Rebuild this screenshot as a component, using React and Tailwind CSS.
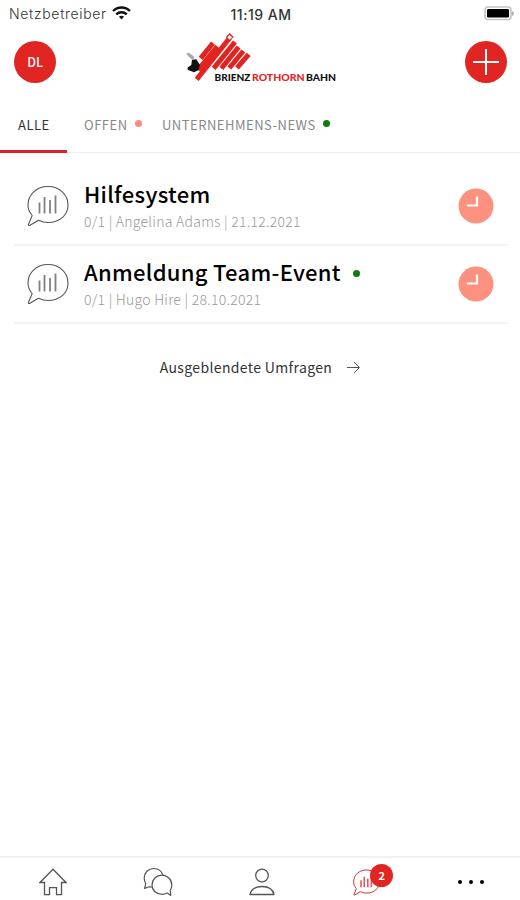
import React from 'react';

const tabs = [
  { label: 'ALLE', active: true, width: 'w-[67px]', pad: 'pl-[18px]', text: 'w-[34px]' },
  { label: 'OFFEN', dot: 'bg-[#fc8b7b]', width: 'w-[80px]', pad: 'pl-[17px]', text: 'w-[45px]' },
  { label: 'UNTERNEHMENS-NEWS', dot: 'bg-[#0b7d0b]', width: 'w-[200px]', pad: 'pl-[15px]', text: 'w-[155px]' },
];

const surveys = [
  { title: 'Hilfesystem', info: '0/1 | Angelina Adams | 21.12.2021' },
  { title: 'Anmeldung Team-Event', info: '0/1 | Hugo Hire | 28.10.2021', isNew: true },
];

function StatusBar() {
  return (
    <div className="h-[27px] grid grid-cols-3 items-center px-[9px] font-['Inter',sans-serif] text-[14px] text-[#333]">
      <div className="flex items-center gap-[5px]">
        <span className="font-light tracking-[0.68px]">Netzbetreiber</span>
        <svg className="-mt-[2px]" width="19" height="14" viewBox="0 0 18 13" fill="none" stroke="#111" strokeWidth="2.3">
          <path d="M1 4.6C5.4.2 12.6.2 17 4.6" />
          <path d="M4 7.8c2.8-2.7 7.2-2.7 10 0" />
          <path d="M6.6 10.1L9 12.7l2.4-2.6c-1.4-1.2-3.4-1.2-4.8 0z" fill="#111" stroke="none" />
        </svg>
      </div>
      <div className="pl-[2px] pt-[1px] text-center font-medium tracking-[0.5px] text-[14px] whitespace-nowrap">11:19 AM</div>
      <div className="flex justify-end -mr-[4px]">
        <svg width="31" height="15" viewBox="0 0 31 15">
          <rect x="1" y="1" width="26" height="12.5" rx="3" fill="#fff" stroke="#c4c4c4" strokeWidth="1.6" />
          <rect x="3" y="3" width="22" height="8.5" rx="1.2" fill="#000" />
          <path d="M28.3 5v5c2-.8 2-4.2 0-5z" fill="#999" />
        </svg>
      </div>
    </div>
  );
}

function Logo() {
  return (
    <svg className="-ml-[2px]" width="170" height="65" viewBox="0 2 170 65">
      <g transform="translate(8 5) scale(.3333)">
        <path
          d="M53 85L90 39M45 120L103 49M41 148L140 24M92 115L156 36M115 115L167 51M139 114L181 63M162 114L197 73"
          stroke="#e2231f"
          strokeWidth="15"
        />
        <path d="M140 9l12 12-12 13-12-13z" fill="#e2231f" />
        <path d="M140 15l7 7-7 7-7-7z" fill="#fff" />
        <path d="M10 70l8-2 14 11 1 8-7 1-10-9z" fill="#aaa" />
        <path d="M27 89l13-1 11 17-5 16-13 6-18-7-2-7 12-8z" fill="#111" />
      </g>
      <text x="39.5" y="55.5" textLength="36" lengthAdjust="spacingAndGlyphs" fontSize="10" fontWeight="900" fill="#111" fontFamily="Lato">BRIENZ</text>
      <text x="77" y="55.5" textLength="52.5" lengthAdjust="spacingAndGlyphs" fontSize="10" fontWeight="900" fill="#e2231f" fontFamily="Lato">ROTHORN</text>
      <text x="131" y="55.5" textLength="30" lengthAdjust="spacingAndGlyphs" fontSize="10" fontWeight="900" fill="#111" fontFamily="Lato">BAHN</text>
    </svg>
  );
}

function SurveyIcon({ className, bars = 1.8 }) {
  return (
    <svg className={className} viewBox="0 0 42 42" fill="none" stroke="currentColor" strokeWidth={bars * 0.6} strokeLinejoin="round">
      <path d="M5.2 30.5C2.5 27.5 1 24 1 20 1 9.5 9.5 1.5 21 1.5S41 9.5 41 20 32.5 37.5 21 37.5c-3.5 0-6.5-.8-9.5-2.3L2.5 40.500c-1 .3-1.300-.5-1-1.200z" />
      <path d="M12.5 17.5v11M17.5 12v16.5M23 15v13.5M28.5 10.5v18" strokeWidth={bars} opacity=".75" />
    </svg>
  );
}

function SurveyRow({ title, info, isNew }) {
  return (
    <li className="h-[78px] flex items-center border-b-2 border-[#f4f4f4] pl-[13px] pr-[14px]">
      <SurveyIcon className="w-[42px] h-[42px] shrink-0 text-[#555]" />
      <div className="flex-1 pl-[15px]">
        <div className="flex items-center gap-[12px]">
          <h2 className="text-[22px] leading-[24px] tracking-[0.3px] font-medium text-black whitespace-nowrap">{title}</h2>
          {isNew && <span className="size-[7px] mt-[4px] rounded-full bg-[#0b7d0b]" />}
        </div>
        <p className="mt-[5px] -mb-[1px] text-[14px] leading-[22px] tracking-[0.26px] font-light text-[#999] whitespace-nowrap">{info}</p>
      </div>
      <svg className="size-[36px]" viewBox="0 0 36 36">
        <circle cx="18" cy="18" r="17.5" fill="#fd9180" />
        <path d="M19 8.5v9H9" fill="none" stroke="#fff" strokeWidth="2.2" />
      </svg>
    </li>
  );
}

function Footer() {
  return (
    <footer className="h-[44px] pl-[1px] flex items-center border-t-2 border-[#f2f2f2] text-[#555]">
      <div className="w-[104.5px] shrink-0 flex justify-center pt-[6px]">
        <svg width="28" height="28" viewBox="0 0 28 28" fill="none" stroke="currentColor" strokeWidth="1.3">
          <path d="M14 1.3L1 14.5h4.5v12.2h5v-7h7v7h5V14.5H27z" />
        </svg>
      </div>
      <div className="w-[104.5px] shrink-0 flex justify-center pt-[5px]">
        <svg width="30" height="30" viewBox="0 0 30 30" fill="none" stroke="currentColor" strokeWidth="1.2" strokeLinejoin="round">
          <path d="M20 8.2C18.5 4 15 1.5 10.8 1.5 5.3 1.5 1.2 5.6 1.2 11c0 2.2.6 4.2 1.6 5.8L1.5 21.5l4.6-1.7 2.6.3" />
          <path d="M27.2 23.5c1-1.7 1.6-3.5 1.6-5.5 0-5.5-4.5-9.8-10-9.8S9 12.5 9 18s4.500 9.300 10 9.300c2 0 3.800-.5 5.300-1.300l3.500 2.500z" />
        </svg>
      </div>
      <div className="w-[104.5px] shrink-0 flex justify-center pt-[6px]">
        <svg width="26" height="28" viewBox="0 0 26 28" fill="none" stroke="currentColor" strokeWidth="1.3" strokeLinejoin="round">
          <circle cx="13" cy="7.5" r="6.3" />
          <path d="M1 26.5c1.2-5.3 6-8 12-8s10.8 2.7 12 8z" />
        </svg>
      </div>
      <div className="w-[104.5px] shrink-0 flex justify-center pt-[6px]">
        <div className="relative">
          <SurveyIcon className="size-[27px] text-[#d8232a]" bars={2.5} />
          <span className="absolute left-[17px] -top-[5px] size-[23px] rounded-full bg-[#e12522] text-white text-[11px] font-bold flex items-center justify-center">2</span>
        </div>
      </div>
      <div className="w-[104.5px] shrink-0 flex justify-center gap-[7px] pt-[5px]">
        <span className="size-[4px] rounded-full bg-black" />
        <span className="size-[4px] rounded-full bg-black" />
        <span className="size-[4px] rounded-full bg-black" />
      </div>
    </footer>
  );
}

export default function App() {
  return (
    <div className="w-[520px] h-[900px] bg-white flex flex-col overflow-hidden font-['Noto_Sans_CJK_SC','Noto_Sans',sans-serif]">
      <StatusBar />
      <header className="h-[72px] flex items-start justify-between px-[14px]">
        <div className="size-[42px] mt-[14px] rounded-full bg-[#e12522] text-white text-[12.5px] font-medium flex items-center justify-center">DL</div>
        <Logo />
        <div className="size-[42px] mt-[14px] -mr-[1px] rounded-full bg-[#e12522] flex items-center justify-center">
          <svg width="28" height="28" viewBox="0 0 28 28" stroke="#fff" strokeWidth="2"><path d="M14 1v26M1 14h26" /></svg>
        </div>
      </header>
      <nav className="h-[54px] flex border-b border-[#eee]">
        {tabs.map((t) => (
          <div key={t.label} className={`${t.width} ${t.pad} h-[54px] flex items-center gap-[6px] border-b-[3px] ${t.active ? 'border-[#d8232a] text-[#333]' : 'border-transparent text-[#888]'}`}>
            <span className={`${t.text} text-[13px] leading-[20px] tracking-[0.5px] whitespace-nowrap`}>{t.label}</span>
            {t.dot && <span className={`size-[7px] -mt-[3px] rounded-full ${t.dot}`} />}
          </div>
        ))}
      </nav>
      <main className="flex-1 pt-[15px]">
        <ul className="ml-[14px] mr-[12px]">
          {surveys.map((s) => <SurveyRow key={s.title} {...s} />)}
        </ul>
        <div className="mt-[32px] flex items-center justify-center gap-[15px] text-[#333]">
          <span className="text-[14px] leading-[22px] tracking-[0.36px]">Ausgeblendete Umfragen</span>
          <svg width="13" height="13" viewBox="0 0 13 13" fill="none" stroke="#555"><path d="M0 6.5h12M7 1l5.5 5.5L7 12" /></svg>
        </div>
      </main>
      <Footer />
    </div>
  );
}
